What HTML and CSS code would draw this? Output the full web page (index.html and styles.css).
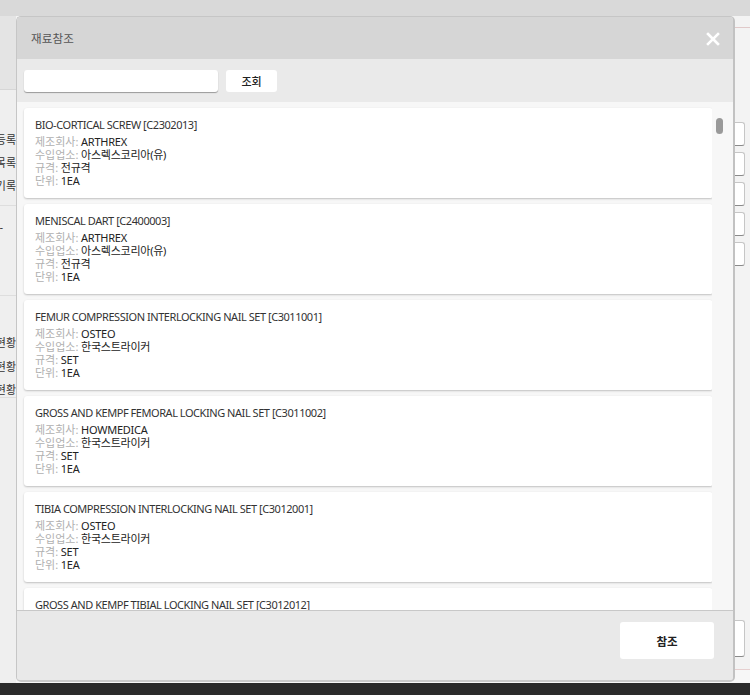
FILE: index.html
```html
<!DOCTYPE html>
<html lang="ko">
<head>
<meta charset="utf-8">
<title>재료참조</title>
<link rel="stylesheet" href="styles.css">
</head>
<body>
<div class="page">
  <div class="topbar"></div>
  <div class="main">
    <aside class="side">
      <div class="side-head"></div>
      <div class="side-group g1">
        <div class="side-item">재료등록</div>
        <div class="side-item">재료목록</div>
        <div class="side-item">출고기록</div>
      </div>
      <div class="side-group g2">
        <div class="side-item dash">-</div>
      </div>
      <div class="side-group g3">
        <div class="side-item">입고현황</div>
        <div class="side-item">출고현황</div>
        <div class="side-item">재고현황</div>
      </div>
    </aside>
    <section class="content">
      <div class="content-head"></div>
      <div class="fields">
        <div class="field"></div>
        <div class="field"></div>
        <div class="field"></div>
        <div class="field"></div>
        <div class="field"></div>
      </div>
      <div class="spacer"></div>
      <div class="field field-lg"></div>
      <div class="content-foot"></div>
    </section>
  </div>
  <div class="taskbar"></div>
</div>

<div class="modal">
  <div class="modal-head">
    <span class="modal-title">재료참조</span>
    <svg class="close" width="14" height="14" viewBox="0 0 14 14"><path d="M2 2 L12 12 M12 2 L2 12" stroke="#fff" stroke-width="2.6" stroke-linecap="square"/></svg>
  </div>
  <div class="modal-search">
    <input class="search-input" type="text">
    <button class="btn btn-sm">조회</button>
  </div>
  <div class="modal-list">
    <div class="cards">
      <div class="card">
        <div class="card-title">BIO-CORTICAL SCREW [C2302013]</div>
        <div class="row"><span class="lbl">제조회사:</span> ARTHREX</div>
        <div class="row"><span class="lbl">수입업소:</span> 아스렉스코리아(유)</div>
        <div class="row"><span class="lbl">규격:</span> 전규격</div>
        <div class="row"><span class="lbl">단위:</span> 1EA</div>
      </div>
      <div class="card">
        <div class="card-title">MENISCAL DART [C2400003]</div>
        <div class="row"><span class="lbl">제조회사:</span> ARTHREX</div>
        <div class="row"><span class="lbl">수입업소:</span> 아스렉스코리아(유)</div>
        <div class="row"><span class="lbl">규격:</span> 전규격</div>
        <div class="row"><span class="lbl">단위:</span> 1EA</div>
      </div>
      <div class="card">
        <div class="card-title">FEMUR COMPRESSION INTERLOCKING NAIL SET [C3011001]</div>
        <div class="row"><span class="lbl">제조회사:</span> OSTEO</div>
        <div class="row"><span class="lbl">수입업소:</span> 한국스트라이커</div>
        <div class="row"><span class="lbl">규격:</span> SET</div>
        <div class="row"><span class="lbl">단위:</span> 1EA</div>
      </div>
      <div class="card">
        <div class="card-title">GROSS AND KEMPF FEMORAL LOCKING NAIL SET [C3011002]</div>
        <div class="row"><span class="lbl">제조회사:</span> HOWMEDICA</div>
        <div class="row"><span class="lbl">수입업소:</span> 한국스트라이커</div>
        <div class="row"><span class="lbl">규격:</span> SET</div>
        <div class="row"><span class="lbl">단위:</span> 1EA</div>
      </div>
      <div class="card">
        <div class="card-title">TIBIA COMPRESSION INTERLOCKING NAIL SET [C3012001]</div>
        <div class="row"><span class="lbl">제조회사:</span> OSTEO</div>
        <div class="row"><span class="lbl">수입업소:</span> 한국스트라이커</div>
        <div class="row"><span class="lbl">규격:</span> SET</div>
        <div class="row"><span class="lbl">단위:</span> 1EA</div>
      </div>
      <div class="card">
        <div class="card-title">GROSS AND KEMPF TIBIAL LOCKING NAIL SET [C3012012]</div>
        <div class="row"><span class="lbl">제조회사:</span> HOWMEDICA</div>
        <div class="row"><span class="lbl">수입업소:</span> 한국스트라이커</div>
        <div class="row"><span class="lbl">규격:</span> SET</div>
        <div class="row"><span class="lbl">단위:</span> 1EA</div>
      </div>
    </div>
    <div class="scroll-track"><div class="scroll-thumb"></div></div>
  </div>
  <div class="modal-foot">
    <button class="btn btn-lg">참조</button>
  </div>
</div>
</body>
</html>
```
FILE: styles.css
```css
* { box-sizing: border-box; }
html, body { margin: 0; padding: 0; }
body {
  width: 750px;
  height: 695px;
  overflow: hidden;
  font-family: "Noto Sans", "Noto Sans CJK KR", sans-serif;
  font-size: 11px;
  color: #222;
  background: #d9d9d9;
}
.page {
  display: flex;
  flex-direction: column;
  height: 695px;
}
.topbar { height: 16px; background: #d9d9d9; flex: none; }
.main { flex: 1; display: flex; background: #efefef; }
.side {
  width: 16px;
  flex: none;
  overflow: hidden;
  background: #efefef;
  display: flex;
  flex-direction: column;
}
.side-head { height: 74px; background: #e4e4e4; border-bottom: 1px solid #d6d6d6; flex: none; }
.side-group { display: flex; flex-direction: column; border-bottom: 1px solid #dedede; flex: none; }
.g1 { padding-top: 43px; gap: 9px; height: 116px; }
.g2 { padding-top: 14px; height: 90px; }
.g3 { padding-top: 40px; gap: 9.5px; }
.side-item {
  display: flex;
  justify-content: flex-end;
  white-space: nowrap;
  font-size: 11px;
  line-height: 14px;
  color: #333;
}
.side-item.dash { padding-right: 13px; }
.content { flex: 1; display: flex; flex-direction: column; align-items: flex-end; background: #f3f3f3; }
.content-head { height: 12px; width: 100%; border-bottom: 1px solid #e0c9c9; margin-top: 0; }
.fields { padding-top: 94px; display: flex; flex-direction: column; gap: 6px; width: 100%; }
.field {
  height: 24px;
  margin-left: 717px;
  width: 12px;
  background: #fff;
  border: 1px solid #c6c6c6;
  border-bottom-color: #8a8a8a;
  border-radius: 0 3px 3px 0;
}
.spacer { flex: 1; }
.field-lg { height: 37px; align-self: flex-start; }
.content-foot { height: 14px; width: 100%; border-top: 1px solid #e6cfcf; background: #f7f7f7; margin-top: 12px; }
.taskbar { height: 12px; background: #2b2b2b; flex: none; }

.modal {
  position: absolute;
  left: 16px;
  top: 16px;
  width: 719px;
  height: 666px;
  display: flex;
  flex-direction: column;
  border: 1px solid #c6c6c6;
  border-right: 2px solid #c2c2c2;
  border-bottom: 2px solid #cbcbcb;
  border-radius: 5px;
  overflow: hidden;
  background: #eaeaea;
}
.modal-head {
  height: 42px;
  flex: none;
  background: #d6d6d6;
  display: flex;
  align-items: center;
  justify-content: space-between;
  padding: 0 13px 0 14px;
}
.modal-title { font-size: 11.5px; color: #555; letter-spacing: 0.2px; }
.close { display: block; margin-top: 1px; }
.modal-search {
  height: 43px;
  flex: none;
  background: #eaeaea;
  display: flex;
  align-items: center;
  gap: 8px;
  padding: 1px 0 0 7px;
}
.search-input {
  width: 194px;
  height: 22px;
  border: none;
  border-radius: 3px;
  background: #fff;
  box-shadow: 0 1px 1px #9a9a9a;
  margin: 0;
  padding: 0 6px;
  outline: none;
}
.btn {
  font-family: "Noto Sans CJK KR", sans-serif;
  background: #fff;
  border: none;
  border-radius: 3px;
  color: #222;
  padding: 0;
  cursor: pointer;
}
.btn-sm { width: 51px; height: 22px; font-size: 11px; font-weight: 500; }
.btn-lg { width: 94px; height: 37px; font-size: 11.5px; font-weight: 700; }
.modal-list {
  flex: 1;
  min-height: 0;
  background: #f7f7f7;
  display: flex;
  overflow: hidden;
}
.cards {
  flex: 1;
  padding: 6px 0 0 7px;
  display: flex;
  flex-direction: column;
  gap: 6px;
  overflow: hidden;
}
.card {
  flex: none;
  width: 689px;
  height: 90px;
  background: #fff;
  border-radius: 3px;
  box-shadow: 0 1px 2px rgba(0,0,0,0.22), 1px 0 1px rgba(0,0,0,0.06);
  padding: 9px 11px 0 11px;
}
.card-title { font-size: 11px; line-height: 15px; color: #333; margin-bottom: 3px; letter-spacing: -0.45px; }
.row { font-size: 11px; line-height: 13px; color: #222; letter-spacing: -0.25px; }
.lbl { color: #b0b0b0; letter-spacing: 0; }
.scroll-track { width: 21px; flex: none; position: relative; }
.scroll-thumb {
  position: absolute;
  left: 4px;
  top: 16px;
  width: 7px;
  height: 16px;
  border-radius: 4px;
  background: #999;
}
.modal-foot {
  height: 70px;
  flex: none;
  border-top: 1px solid #c8c8c8;
  background: #e9e9e9;
  display: flex;
  justify-content: flex-end;
  align-items: flex-start;
  padding: 11px 19px 0 0;
}
```
